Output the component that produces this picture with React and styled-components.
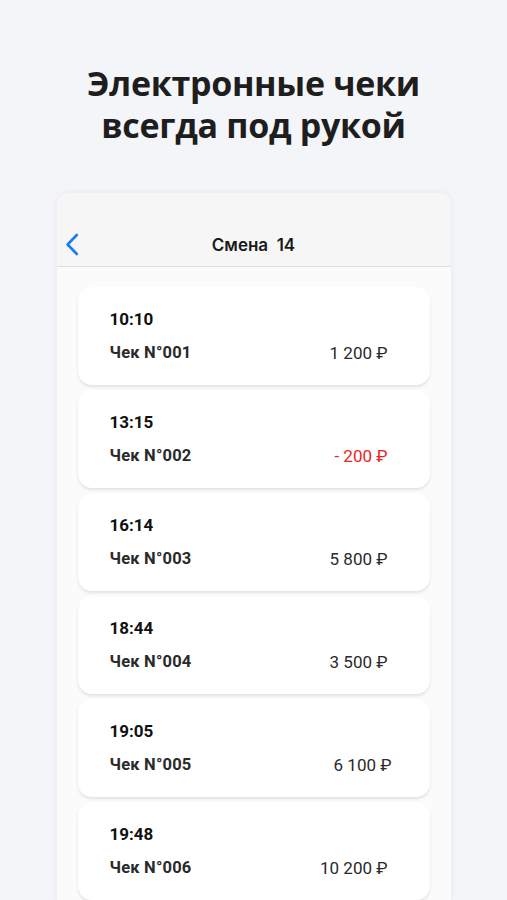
import React from "react";
import styled, { createGlobalStyle } from "styled-components";

const receipts = [
  { time: "10:10", num: "001", amount: "1 200 ₽" },
  { time: "13:15", num: "002", amount: "- 200 ₽", refund: true },
  { time: "16:14", num: "003", amount: "5 800 ₽" },
  { time: "18:44", num: "004", amount: "3 500 ₽" },
  { time: "19:05", num: "005", amount: "6 100 ₽", shift: 4 },
  { time: "19:48", num: "006", amount: "10 200 ₽" },
];

function App() {
  return (
    <Page>
      <GlobalStyle />
      <Title>
        Электронные чеки
        <br />
        всегда под рукой
      </Title>
      <Phone>
        <Header>
          <BackButton aria-label="Назад">
            <svg width="14" height="23" viewBox="0 0 14 23">
              <path d="M11.8 2 L2.6 11.5 L11.8 21" fill="none" stroke="#1a7cf2" strokeWidth="2.6" strokeLinecap="round" strokeLinejoin="round" />
            </svg>
          </BackButton>
          <HeaderTitle>Смена&nbsp; 14</HeaderTitle>
        </Header>
        <List>
          {receipts.map((r) => (
            <Card key={r.num}>
              <Time>{r.time}</Time>
              <Row>
                <CheckName>Чек N°{r.num}</CheckName>
                <Amount $refund={r.refund} $shift={r.shift}>{r.amount}</Amount>
              </Row>
            </Card>
          ))}
        </List>
      </Phone>
    </Page>
  );
}

export default App;

// Styled Components

const GlobalStyle = createGlobalStyle`
  html, body {
    margin: 0;
    padding: 0;
    background: #f4f5f9;
  }
  body {
    font-family: "Open Sans", "Noto Sans", sans-serif;
    color: #1c1c1c;
  }
`;

const Page = styled.div`
  width: 507px;
  height: 900px;
  overflow: hidden;
  display: flex;
  flex-direction: column;
  align-items: center;
  background: #f4f5f9;
`;

const Title = styled.h1`
  margin: 62px 0 0;
  font-family: "Open Sans", sans-serif;
  font-weight: 700;
  font-size: 34px;
  line-height: 42px;
  letter-spacing: -0.3px;
  text-align: center;
  color: #1e1e1e;
`;

const Phone = styled.div`
  margin-top: 47px;
  width: 394px;
  flex: 1;
  background: #fbfbfb;
  border-radius: 12px 12px 0 0;
  box-shadow: 0 0 6px rgba(30, 40, 80, 0.07);
  display: flex;
  flex-direction: column;
`;

const Header = styled.div`
  height: 74px;
  flex-shrink: 0;
  background: #f6f6f6;
  border-radius: 12px 12px 0 0;
  border-bottom: 1px solid #dedede;
  display: flex;
  align-items: flex-end;
  justify-content: center;
  position: relative;
  padding-bottom: 10px;
  box-sizing: border-box;
`;

const BackButton = styled.div`
  position: absolute;
  left: 8px;
  bottom: 10px;
  display: flex;
`;

const HeaderTitle = styled.div`
  font-family: "Inter", "Roboto", sans-serif;
  font-weight: 600;
  font-size: 17px;
  line-height: 22px;
  color: #1a1a1a;
`;

const List = styled.div`
  padding: 20px 21px 0;
  display: flex;
  flex-direction: column;
  gap: 5px;
`;

const Card = styled.div`
  height: 98px;
  box-sizing: border-box;
  background: #ffffff;
  border-radius: 14px;
  box-shadow: 0 2px 3px rgba(0, 0, 0, 0.1);
  padding: 22px 42px 0 32px;
  display: flex;
  flex-direction: column;
  gap: 14px;
`;

const Time = styled.div`
  font-family: "Roboto", sans-serif;
  font-weight: 700;
  font-size: 17px;
  line-height: 20px;
  color: #111;
`;

const Row = styled.div`
  display: flex;
  justify-content: space-between;
  align-items: center;
`;

const CheckName = styled.div`
  font-family: "Roboto", sans-serif;
  font-weight: 700;
  font-size: 16.5px;
  letter-spacing: 0.2px;
  line-height: 20px;
  color: #2a2a2a;
`;

const Amount = styled.div`
  font-family: "Roboto", sans-serif;
  font-weight: 400;
  font-size: 17px;
  line-height: 20px;
  color: ${(p) => (p.$refund ? "#e8271c" : "#2a2a2a")};
  margin-right: ${(p) => (p.$shift ? -p.$shift : 0)}px;
`;
